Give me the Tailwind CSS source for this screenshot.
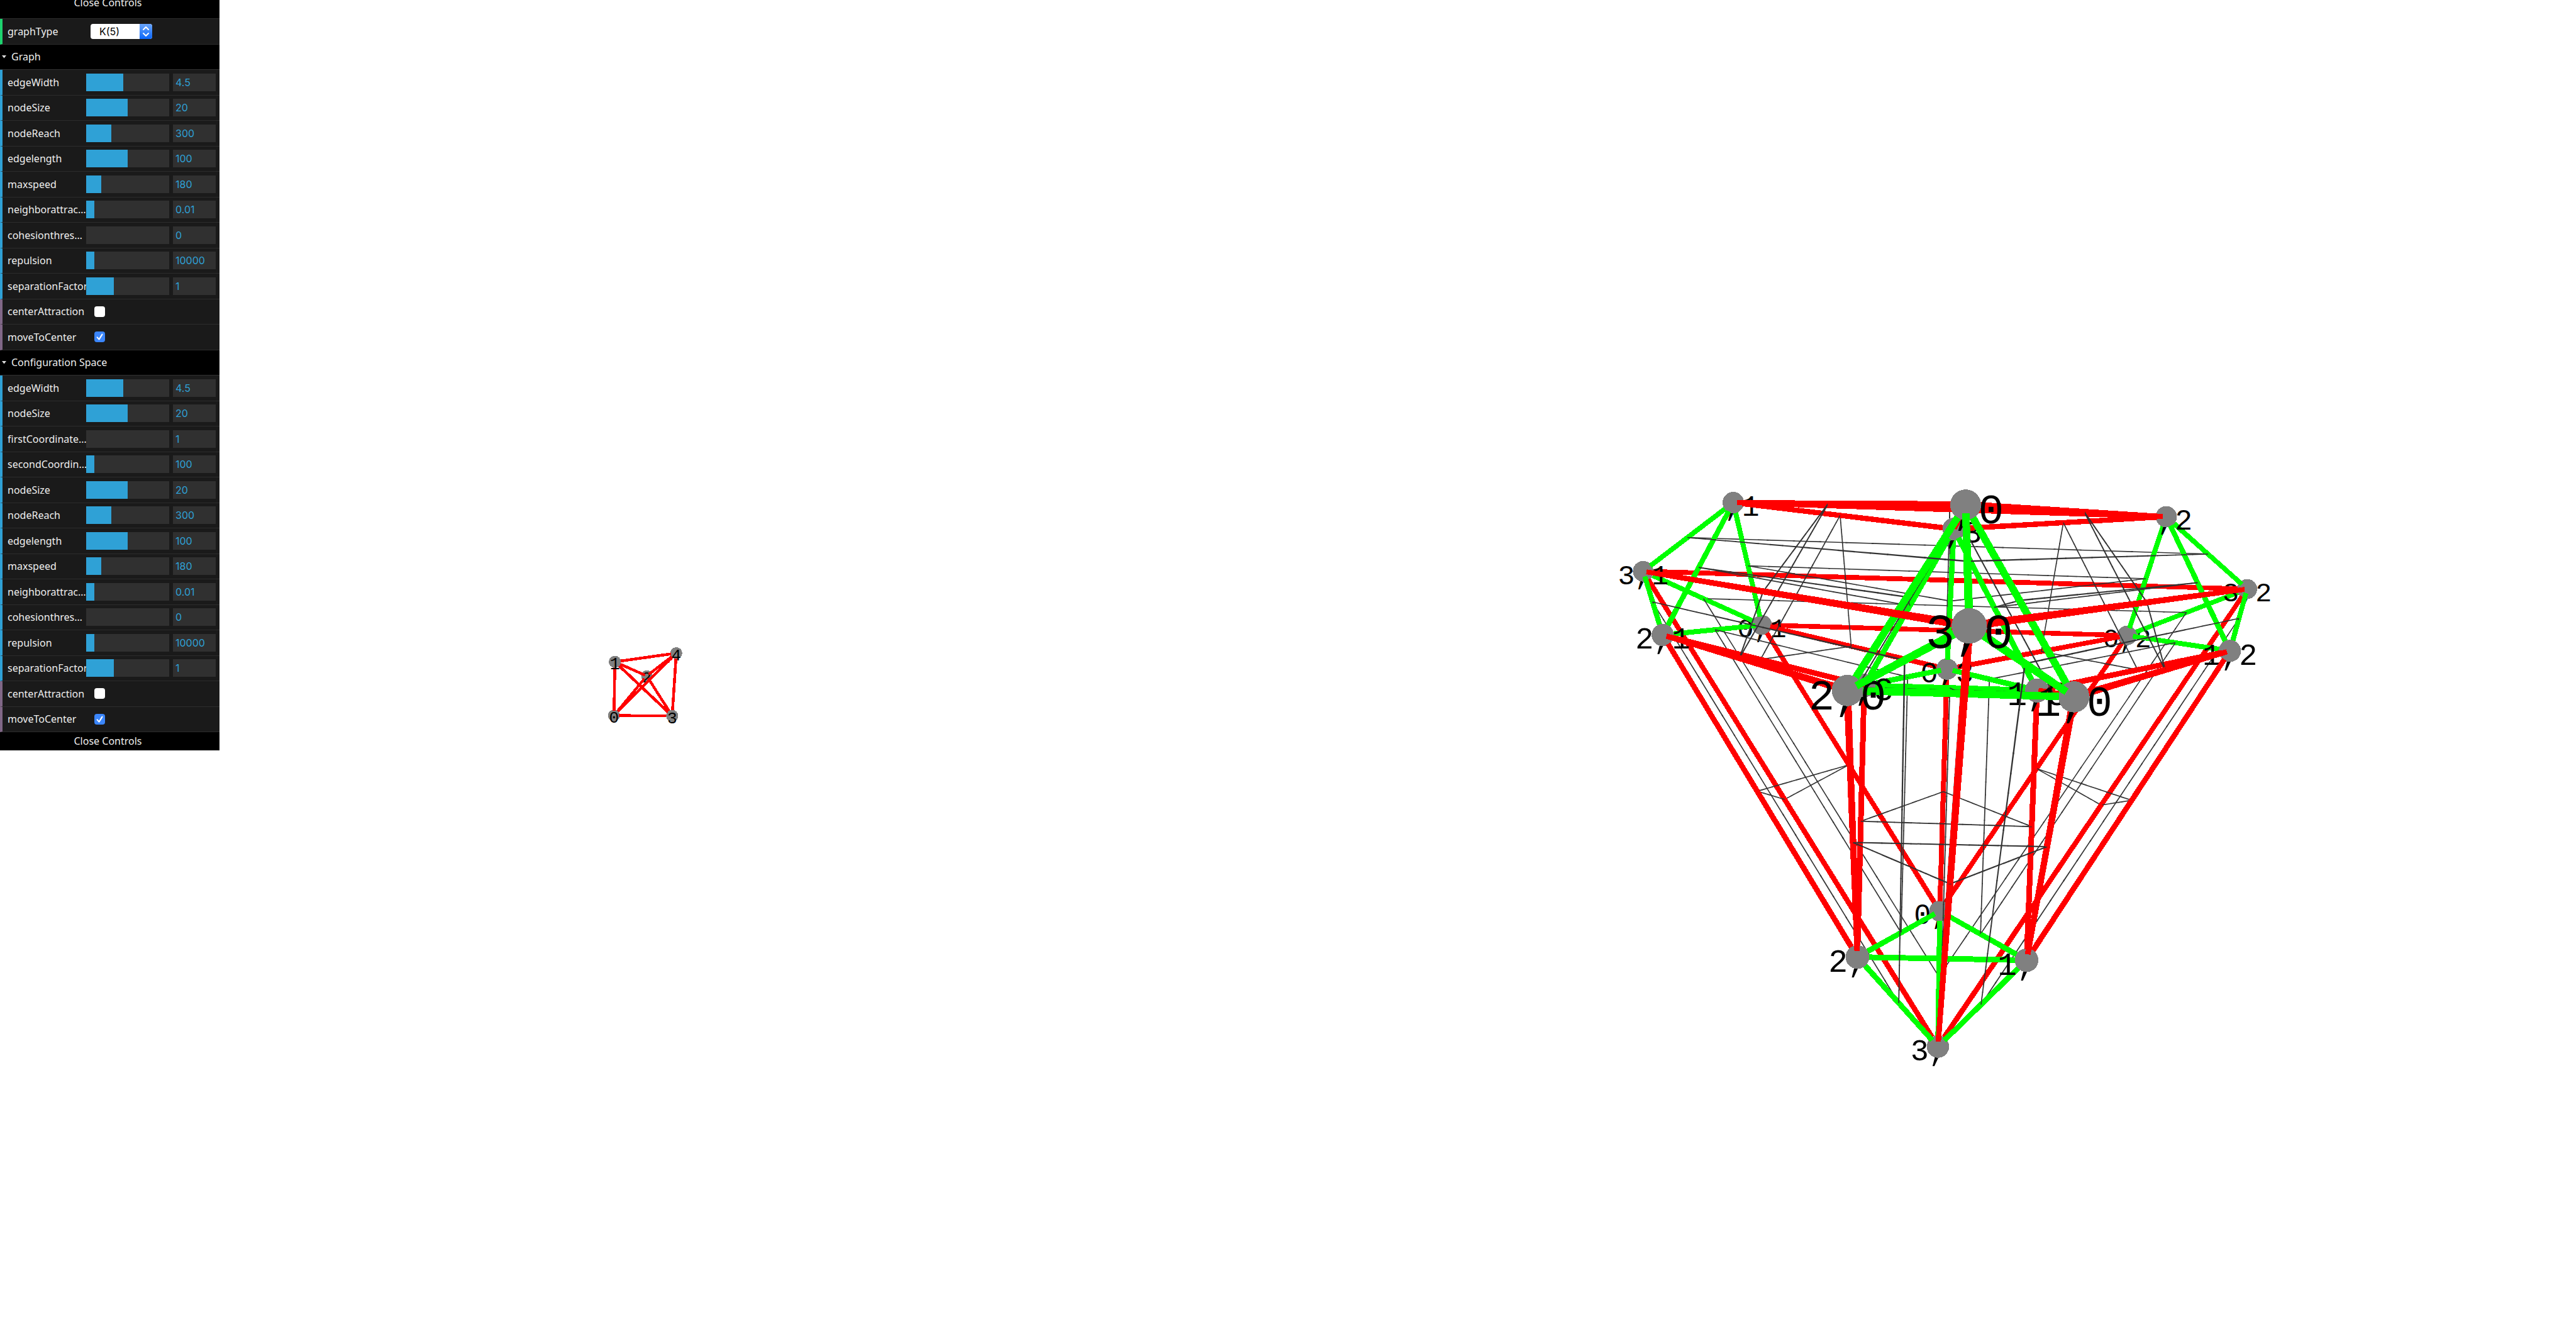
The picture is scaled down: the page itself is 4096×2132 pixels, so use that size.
<!DOCTYPE html>
<html lang="en">
<head>
<meta charset="utf-8">
<title>Configuration Space</title>
<script src="https://cdn.jsdelivr.net/npm/@tailwindcss/browser@4"></script>
</head>
<body class="bg-white">
<main class="relative overflow-hidden">
  <div class="flex w-full">
    <svg id="graph" class="block w-1/2" viewBox="0 0 2832 2948" role="img" aria-label="Graph K(5)"></svg>
    <svg id="space" class="block w-1/2" viewBox="2832 0 2832 2948" role="img" aria-label="Configuration space"></svg>
  </div>

  <aside class="absolute left-0 top-0 w-[349px] overflow-hidden bg-[#1a1a1a] font-['Noto_Sans',sans-serif] text-base text-[#eee]">
    <button type="button" class="flex h-[30px] w-full items-start justify-center border-b border-[#2c2c2c] bg-black pr-1.5"><span class="-mt-2.5 leading-[29px]">Close Controls</span></button>
    <ul id="controls" class="grid h-[1134px] auto-rows-fr"></ul>
    <button type="button" class="flex h-[29px] w-full items-center justify-center bg-black pr-1.5 leading-[29px]">Close Controls</button>
  </aside>
</main>

<script>
// ---------- control panel ----------
const shared = [
  ['num', 'nodeReach', 30, '300'], ['num', 'edgelength', 50, '100'], ['num', 'maxspeed', 18, '180'],
  ['num', 'neighborattrac…', 10, '0.01'], ['num', 'cohesionthres…', 0, '0'], ['num', 'repulsion', 10, '10000'],
  ['num', 'separationFactor', 33.4, '1'], ['bool', 'centerAttraction', false], ['bool', 'moveToCenter', true]
];
const rows = [
  ['select', 'graphType', 'K(5)'],
  ['title', 'Graph'],
  ['num', 'edgeWidth', 45, '4.5'], ['num', 'nodeSize', 50, '20'], ...shared,
  ['title', 'Configuration Space'],
  ['num', 'edgeWidth', 45, '4.5'], ['num', 'nodeSize', 50, '20'],
  ['num', 'firstCoordinate…', 0, '1'], ['num', 'secondCoordin…', 10, '100'],
  ['num', 'nodeSize', 50, '20'], ...shared
];
const label = (id, name) => `<label for="${id}" class="w-[125px] shrink-0 overflow-hidden whitespace-nowrap">${name}</label>`;
document.getElementById('controls').innerHTML = rows.map(([type, name, a, b], i) => {
  const id = 'c' + i;
  if (type === 'title') return `<li class="flex items-center border-b border-[#303030] bg-black"><button type="button" class="flex items-center gap-2 pl-[3px]"><svg class="h-[5px] w-[7px]" viewBox="0 0 7 5"><path d="M0 0h7L3.5 4.5z" fill="#ddd"/></svg>${name}</button></li>`;
  if (type === 'select') return `<li class="flex items-center border-b border-l-4 border-b-[#2c2c2c] border-l-[#1ed36f] pl-2">${label(id, name)}
    <div class="relative ml-[7px] h-6 w-[98px]"><select id="${id}" class="h-6 w-full appearance-none rounded bg-white pl-3.5 font-['Inter',sans-serif] text-base leading-6 text-black"><option>${a}</option></select>
    <svg class="pointer-events-none absolute right-0 top-0 h-6 w-5" viewBox="0 0 20 24"><defs><linearGradient id="arrows" x2="0" y2="1"><stop stop-color="#6ba6fb"/><stop offset="1" stop-color="#0a66fa"/></linearGradient></defs><path d="M0 0h16a4 4 0 0 1 4 4v16a4 4 0 0 1-4 4H0z" fill="url(#arrows)"/><path d="M6 9l4-4 4 4M6 15l4 4 4-4" fill="none" stroke="#fff" stroke-width="2" stroke-linecap="round" stroke-linejoin="round"/></svg></div></li>`;
  if (type === 'bool') return `<li class="flex items-center border-b border-l-4 border-b-[#2c2c2c] border-l-[#806787] pl-2">${label(id, name)}
    <span class="ml-[13px] grid"><input id="${id}" type="checkbox" ${a ? 'checked' : ''} class="col-start-1 row-start-1 size-[17px] appearance-none rounded bg-white checked:bg-[#3b86fb]">
    ${a ? '<svg class="pointer-events-none col-start-1 row-start-1 size-[17px]" viewBox="0 0 17 17"><path d="M4.5 9.2l3 3.4 5-8" fill="none" stroke="#fff" stroke-width="2" stroke-linecap="round" stroke-linejoin="round"/></svg>' : ''}</span></li>`;
  return `<li class="flex items-center border-b border-l-4 border-b-[#2c2c2c] border-l-[#2fa1d6] pl-2">${label(id, name)}
    <input type="range" aria-label="${name}" min="0" max="100" step="any" value="${a}" class="h-7 w-[132px] shrink-0 appearance-none bg-[#303030] [&::-webkit-slider-thumb]:w-0 [&::-webkit-slider-thumb]:appearance-none" style="background-image:linear-gradient(90deg,#2fa1d6 ${a}%,#303030 ${a}%)">
    <input id="${id}" type="text" value="${b}" class="ml-1.5 h-7 w-[68px] shrink-0 bg-[#303030] pl-1 font-['Inter',sans-serif] text-base text-[#2fa1d6]"></li>`;
}).join('');

// ---------- 3D scene: nodes are [label, x, y, radius] as projected; depth follows from the radius ----------
const FOCAL = 2553, RED = '#f00', GREEN = '#0f0', DARK = '#333';

function scene(svg, cx, cy, nodes, edges, lines, labelsInFront) {
  const to3 = ([, x, y, r]) => [(x - cx) / r, (y - cy) / r, FOCAL / r];
  const project = p => { const r = FOCAL / p[2]; return [p[0] * r + cx, p[1] * r + cy, r]; };
  const mix = (a, b, t) => a.map((v, i) => v + (b[i] - v) * t);
  const items = [];
  function tube(a, b, color, size, t0, t1, n, rendering) {
    for (let i = 0; i < n; i++) {
      const s = t0 + (t1 - t0) * i / n, e = t0 + (t1 - t0) * (i + 1) / n;
      const p = project(mix(a, b, s)), q = project(mix(a, b, Math.min(t1, e + (t1 - t0) * 0.004)));
      const len = Math.hypot(q[0] - p[0], q[1] - p[1]) || 1;
      const nx = -(q[1] - p[1]) / len * size, ny = (q[0] - p[0]) / len * size;
      const pts = [[p[0] + nx * p[2], p[1] + ny * p[2]], [q[0] + nx * q[2], q[1] + ny * q[2]], [q[0] - nx * q[2], q[1] - ny * q[2]], [p[0] - nx * p[2], p[1] - ny * p[2]]];
      items.push([mix(a, b, (s + e) / 2)[2], `<polygon points="${pts.map(v => v.map(c => c.toFixed(1)).join()).join(' ')}" fill="${color}" shape-rendering="${rendering}"/>`]);
    }
  }
  const P = Object.fromEntries(nodes.map(n => [n[0], to3(n)]));
  for (const [u, v, color] of edges) {
    const a = P[u], b = P[v], cut = 0.97 / Math.hypot(a[0] - b[0], a[1] - b[1], a[2] - b[2]);
    tube(a, b, color, 0.238, cut, 1 - cut, 28, 'crispEdges');
  }
  for (const [u1, u2, v1, v2] of lines) tube(mix(P[u1], P[u2], .5), mix(P[v1], P[v2], .5), DARK, 0.048, 0, 1, 20, 'auto');
  for (const [name, x, y, r] of nodes) {
    const text = `<text x="${x}" y="${Math.round(y + 1.22 * r)}" font-size="${Math.round(2.74 * r)}" text-anchor="middle" class="whitespace-pre font-['Liberation_Mono',monospace]">${name}</text>`;
    const ball = `<circle cx="${x}" cy="${y}" r="${r}" fill="#808080" shape-rendering="crispEdges"/>`;
    items.push([FOCAL / r, labelsInFront ? ball : text + ball]);
    if (labelsInFront) items.push([FOCAL / r - 1, text]);
  }
  items.sort((a, b) => b[0] - a[0]);
  svg.innerHTML = items.map(i => i[1]).join('');
}

scene(document.getElementById('graph'), 1416, 1474,
  [['0', 1350, 1573, 13], ['1', 1352, 1455, 13.4], ['2', 1422, 1486, 12.4], ['3', 1478, 1574, 13.3], ['4', 1487, 1436, 13.1]],
  [['0', '1', RED], ['0', '2', RED], ['0', '3', RED], ['0', '4', RED], ['1', '2', RED], ['1', '3', RED], ['1', '4', RED], ['2', '3', RED], ['2', '4', RED], ['3', '4', RED]], [], true);

const names = [' ', '0', '1', '2', '3'], key = (a, b) => a + ',' + b, edges = [], lines = [], pairs = [];
for (let i = 0; i < 5; i++) for (let j = i + 1; j < 5; j++) pairs.push([names[i], names[j]]);
for (const [a, b] of pairs) for (const c of names) if (c !== a && c !== b) {
  edges.push([key(a, c), key(b, c), GREEN]);
  edges.push([key(c, a), key(c, b), RED]);
}
for (const [a, b] of pairs) for (const [c, d] of pairs) if (a !== c && a !== d && b !== c && b !== d) {
  lines.push([key(a, c), key(b, c), key(a, d), key(b, d)]);
  lines.push([key(a, c), key(a, d), key(b, c), key(b, d)]);
}
scene(document.getElementById('space'), 4248, 1474, [
  [' ,1', 3811, 1105, 23.5], ['3,1', 3613, 1256, 22.7], ['2,1', 3656, 1396, 24.5], ['0,1', 3874, 1374, 22],
  [' ,0', 4322, 1110, 34], ['3,0', 4330, 1376, 39], ['2,0', 4062, 1518, 34.5], ['1,0', 4560, 1532, 34.3],
  [' ,3', 4296, 1163, 25], ['0,3', 4281, 1471, 23.6], ['2,3', 4099, 1507, 26], ['1,3', 4479, 1518, 26.5],
  [' ,2', 4763, 1136, 23.5], ['3,2', 4941, 1295, 22], ['0,2', 4677, 1397, 21.5], ['1,2', 4903, 1431, 24.3],
  ['0, ', 4265, 2003, 23], ['2, ', 4084, 2104, 26], ['1, ', 4456, 2111, 26], ['3, ', 4261, 2301, 24.6]
], edges, lines, false);
</script>
</body>
</html>
